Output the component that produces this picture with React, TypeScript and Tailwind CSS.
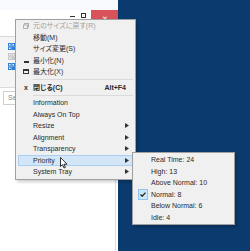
import React from 'react';

const font = "font-['Liberation_Sans','Noto_Sans_CJK_JP',sans-serif] [font-feature-settings:'palt']";

type Item = {
  label: string;
  icon?: React.ReactNode;
  shortcut?: string;
  sub?: boolean;
  disabled?: boolean;
  bold?: boolean;
  active?: boolean;
};

const Arrow = () => (
  <svg width="4" height="5" viewBox="0 0 4 5" className="shrink-0">
    <path d="M0 0 L4 2.5 L0 5 Z" fill="#333" />
  </svg>
);

function MenuRow({ item }: { item: Item }) {
  return (
    <div
      className={`mx-[2px] flex h-[11.5px] items-center border ${
        item.active ? 'border-[#a9d0f2] bg-[#d3e6f8]' : 'border-transparent'
      }`}
    >
      <div className="flex w-[14px] shrink-0 items-center justify-center">{item.icon}</div>
      <span
        className={`flex-1 text-[7px] leading-none ${item.disabled ? 'text-[#a0a0a0]' : 'text-[#2a2a2a]'} ${
          item.bold ? 'font-bold' : ''
        }`}
      >
        {item.label}
      </span>
      {item.shortcut && <span className="mr-[6px] text-[7px] leading-none font-bold text-[#2a2a2a]">{item.shortcut}</span>}
      {item.sub && (
        <span className="mr-[3px]">
          <Arrow />
        </span>
      )}
    </div>
  );
}

const Sep = () => (
  <div className="flex h-[4px] items-center pl-[17px] pr-[2px]">
    <div className="h-px w-full bg-[#dadada]" />
  </div>
);

const restoreIcon = (
  <svg width="6" height="6" viewBox="0 0 6 6">
    <rect x="1.5" y="0.5" width="4" height="3.5" fill="none" stroke="#b0b0b0" />
    <rect x="0.5" y="2" width="4" height="3.5" fill="#f0f0f0" stroke="#b0b0b0" />
  </svg>
);

const minIcon = <div className="mt-[3px] h-[1.5px] w-[5px] bg-[#333]" />;
const maxIcon = <div className="h-[5px] w-[6px] border border-[#333] border-t-2" />;
const closeIcon = <span className="text-[7px] leading-none font-bold text-[#333]">x</span>;

const topItems: Item[] = [
  { label: '元のサイズに戻す(R)', icon: restoreIcon, disabled: true },
  { label: '移動(M)' },
  { label: 'サイズ変更(S)' },
  { label: '最小化(N)', icon: minIcon },
  { label: '最大化(X)', icon: maxIcon },
];

const lowerItems: Item[] = [
  { label: 'Information' },
  { label: 'Always On Top' },
  { label: 'Resize', sub: true },
  { label: 'Alignment', sub: true },
  { label: 'Transparency', sub: true },
  { label: 'Priority', sub: true, active: true },
  { label: 'System Tray', sub: true },
];

const priorities = ['Real Time: 24', 'High: 13', 'Above Normal: 10', 'Normal: 8', 'Below Normal: 6', 'Idle: 4'];

function GridIcon({ color }: { color: string }) {
  return (
    <svg width="7" height="7" viewBox="0 0 7 7">
      <rect x="0.5" y="0.5" width="2.5" height="2.5" fill="none" stroke={color} />
      <rect x="4" y="0.5" width="2.5" height="2.5" fill="none" stroke={color} />
      <rect x="0.5" y="4" width="2.5" height="2.5" fill="none" stroke={color} />
      <rect x="4" y="4" width="2.5" height="2.5" fill={color} stroke={color} />
    </svg>
  );
}

export default function App() {
  return (
    <div className={`relative flex h-[251px] w-[250px] overflow-hidden bg-[#0b3a6f] ${font}`}>
      {/* background window */}
      <div className="flex h-full w-[118px] flex-col bg-white">
        <div className="h-[10px] bg-[#f7f9fc]" />
        <div className="flex h-[27px] items-start justify-end border-b border-[#d9d9d9]">
          <div className="mt-[6px] mr-[6px] h-[1px] w-[5px] bg-[#333]" />
          <div className="mt-[3px] mr-[5px] h-[5px] w-[5px] border border-[#333]" />
          <div className="flex h-[18px] w-[27px] items-center justify-center bg-[#d8525a] text-[7px] text-white">✕</div>
        </div>
        <div className="flex h-[50px] flex-col gap-[3px] border-r border-[#dcdcdc] bg-[#f5f5f5] pt-[6px] pl-[8px]">
          <GridIcon color="#2f7fd6" />
          <GridIcon color="#c6c6c6" />
          <GridIcon color="#2f7fd6" />
        </div>
        <div className="mr-[2px] flex-1 border-t border-r border-[#dcdcdc] pt-[3px] pl-[3px]">
          <div className="flex h-[14px] w-[60px] items-center border border-[#cfcfcf] pl-[4px] text-[7px] text-[#8a8a8a]">
            Search
          </div>
        </div>
      </div>
      <div className="flex-1" />

      {/* system menu */}
      <div className="absolute top-[19px] left-[15px] w-[121px] border border-[#a0a0a0] bg-[#f0f0f0] pb-[1px] shadow-[2px_2px_3px_rgba(0,0,0,0.2)]">
        {topItems.map((it) => (
          <MenuRow key={it.label} item={it} />
        ))}
        <Sep />
        <MenuRow item={{ label: '閉じる(C)', icon: closeIcon, bold: true, shortcut: 'Alt+F4' }} />
        <Sep />
        {lowerItems.map((it) => (
          <MenuRow key={it.label} item={it} />
        ))}
      </div>

      {/* priority submenu */}
      <div className="absolute top-[152px] left-[132px] w-[103px] border border-[#a0a0a0] bg-[#f0f0f0] py-[1px] shadow-[2px_2px_3px_rgba(0,0,0,0.2)]">
        {priorities.map((p) => (
          <div key={p} className="mx-[2px] flex h-[11.5px] items-center">
            <div className="flex w-[16px] shrink-0 items-center justify-center">
              {p.startsWith('Normal') && (
                <div className="flex h-[11px] w-[10px] items-center justify-center border border-[#8fc5f2] bg-[#cce6fb]">
                  <svg width="6" height="5" viewBox="0 0 6 5">
                    <path d="M0.5 2.5 L2.2 4.2 L5.5 0.6" fill="none" stroke="#222" strokeWidth="1.3" />
                  </svg>
                </div>
              )}
            </div>
            <span className="text-[7px] leading-none text-[#2a2a2a]">{p}</span>
          </div>
        ))}
      </div>

      {/* mouse cursor */}
      <svg className="absolute top-[157px] left-[60px]" width="8" height="12" viewBox="0 0 8 12">
        <path d="M0.5 0.5 L0.5 9.5 L2.6 7.6 L4 11 L5.4 10.4 L4 7.2 L7 7.2 Z" fill="#fff" stroke="#000" strokeWidth="0.8" strokeLinejoin="round" />
      </svg>
    </div>
  );
}
